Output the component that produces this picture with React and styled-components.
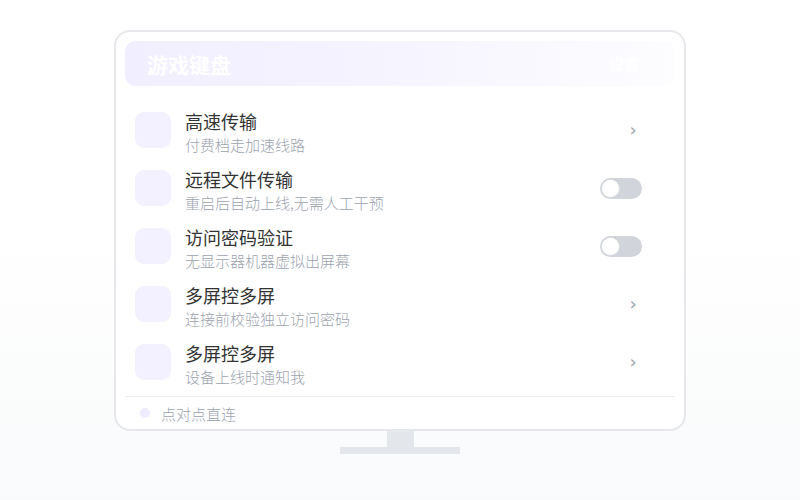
import React from "react";
import styled, { createGlobalStyle } from "styled-components";

const Global = createGlobalStyle`
  html, body { margin: 0; padding: 0; }
  body {
    font-family: "Noto Sans CJK SC", "Noto Sans", sans-serif;
    background: linear-gradient(180deg, #ffffff 0%, #ffffff 45%, #f9fafb 100%);
    width: 800px;
    height: 500px;
    overflow: hidden;
  }
`;

const Page = styled.div`
  width: 800px;
  height: 500px;
  display: flex;
  flex-direction: column;
  align-items: center;
  padding-top: 30px;
  box-sizing: border-box;
`;

const Monitor = styled.div`
  width: 572px;
  height: 401px;
  box-sizing: border-box;
  border: 2px solid #e5e7eb;
  border-radius: 16px;
  background: #ffffff;
  padding: 9px 9px 0 9px;
  display: flex;
  flex-direction: column;
`;

const Header = styled.div`
  height: 45px;
  border-radius: 10px;
  background: linear-gradient(90deg, #f1eeff 0%, #f6f4ff 50%, #fbfaff 85%, #fdfdff 100%);
  display: flex;
  align-items: center;
  justify-content: space-between;
  padding: 0 22px;
  flex-shrink: 0;
`;

const Title = styled.div`
  color: #ffffff;
  font-size: 21px;
  font-weight: 700;
`;

const HeaderExtra = styled.div`
  color: #ffffff;
  font-size: 15px;
  font-weight: 700;
  margin-right: 14px;
`;

const List = styled.div`
  display: flex;
  flex-direction: column;
  padding-top: 15px;
`;

const Row = styled.div`
  height: 58px;
  display: flex;
  align-items: center;
  padding: 0 32px 0 10px;
`;

const IconBox = styled.div`
  width: 36px;
  height: 36px;
  border-radius: 9px;
  background: #f3f0ff;
  flex-shrink: 0;
`;

const Texts = styled.div`
  flex: 1;
  margin-left: 14px;
  display: flex;
  flex-direction: column;
  padding-top: 3px;
`;

const RowTitle = styled.div`
  font-size: 18px;
  font-weight: 400;
  color: #333333;
  line-height: 26px;
`;

const RowSub = styled.div`
  font-size: 15px;
  font-weight: 300;
  color: #9ca3af;
  line-height: 22px;
`;

const Chevron = styled.div`
  width: 16px;
  text-align: center;
  color: #9ca3af;
  font-size: 18px;
  line-height: 1;
  margin-right: 2px;
  font-family: "DejaVu Sans", sans-serif;
`;

const Toggle = styled.div`
  width: 42px;
  height: 21px;
  border-radius: 11px;
  background: #d1d5db;
  display: flex;
  align-items: center;
  padding: 0 2px;
  box-sizing: border-box;
  margin-right: 1px;
`;

const Knob = styled.div`
  width: 17px;
  height: 17px;
  border-radius: 50%;
  background: #ffffff;
  box-shadow: 0 0 0 0.5px #e5e7eb;
`;

const Divider = styled.div`
  height: 1px;
  background: #eeeef2;
  margin-top: 5px;
`;

const Footer = styled.div`
  display: flex;
  align-items: center;
  height: 32px;
  padding-left: 15px;
`;

const Dot = styled.div`
  width: 10px;
  height: 10px;
  border-radius: 50%;
  background: #efebff;
`;

const FooterText = styled.div`
  margin-left: 11px;
  font-size: 15px;
  font-weight: 300;
  color: #9ca3af;
`;

const Neck = styled.div`
  width: 27px;
  height: 16px;
  background: #e3e6ea;
`;

const Base = styled.div`
  width: 120px;
  height: 7px;
  background: #e3e6ea;
`;

const items = [
  { title: "高速传输", sub: "付费档走加速线路", type: "chevron" },
  { title: "远程文件传输", sub: "重启后自动上线,无需人工干预", type: "toggle" },
  { title: "访问密码验证", sub: "无显示器机器虚拟出屏幕", type: "toggle" },
  { title: "多屏控多屏", sub: "连接前校验独立访问密码", type: "chevron" },
  { title: "多屏控多屏", sub: "设备上线时通知我", type: "chevron" },
];

export default function App() {
  return (
    <>
      <Global />
      <Page>
        <Monitor>
          <Header>
            <Title>游戏键盘</Title>
            <HeaderExtra>设置</HeaderExtra>
          </Header>
          <List>
            {items.map((it, i) => (
              <Row key={i}>
                <IconBox />
                <Texts>
                  <RowTitle>{it.title}</RowTitle>
                  <RowSub>{it.sub}</RowSub>
                </Texts>
                {it.type === "chevron" ? (
                  <Chevron>›</Chevron>
                ) : (
                  <Toggle>
                    <Knob />
                  </Toggle>
                )}
              </Row>
            ))}
          </List>
          <Divider />
          <Footer>
            <Dot />
            <FooterText>点对点直连</FooterText>
          </Footer>
        </Monitor>
        <Neck />
        <Base />
      </Page>
    </>
  );
}
